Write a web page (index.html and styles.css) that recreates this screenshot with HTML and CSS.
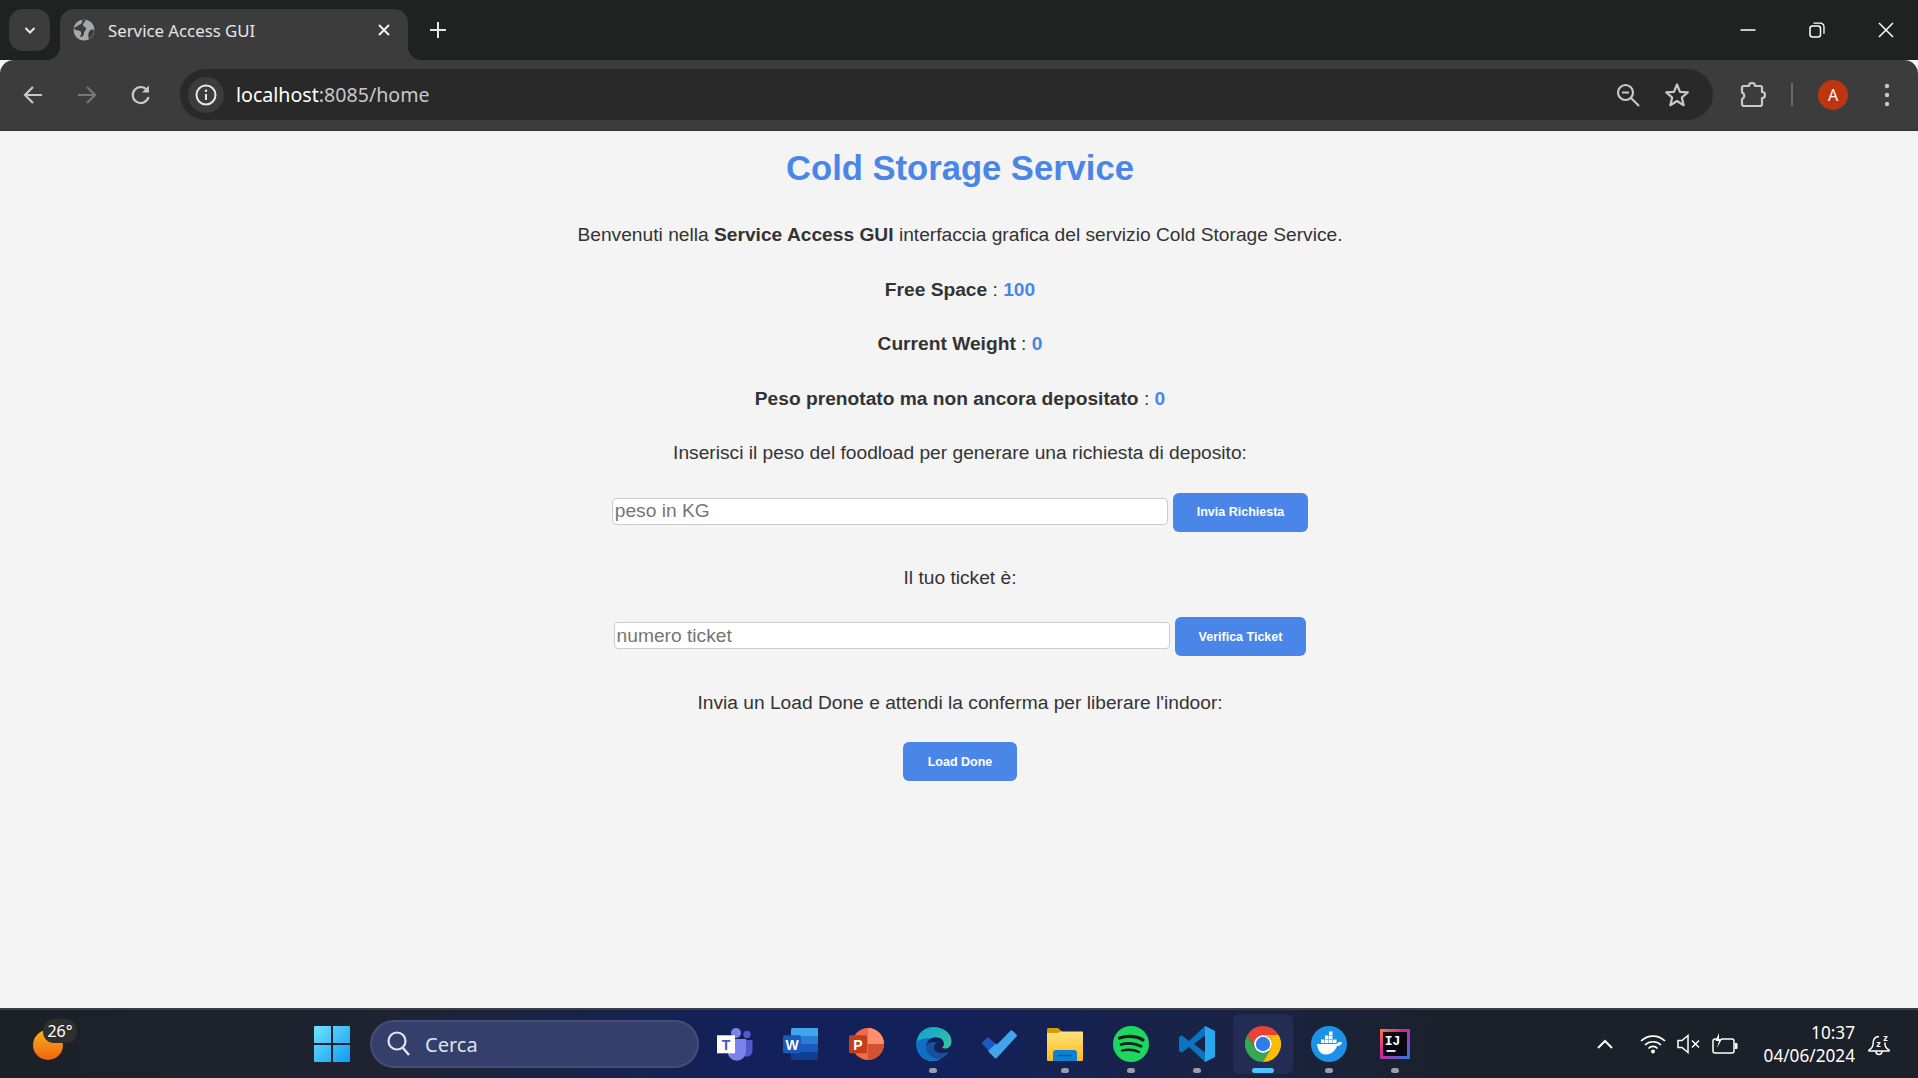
FILE: index.html
```html
<!DOCTYPE html>
<html lang="it">
<head>
    <meta charset="UTF-8">
    <meta name="viewport" content="width=device-width, initial-scale=1.0">
    <title>Service Access GUI</title>
    <link rel="stylesheet" href="styles.css">
</head>
<body>
    <div class="tabstrip">
        <div class="tab-search">
            <svg width="14" height="14" viewBox="0 0 14 14"><path d="M2.5 5L7 9.500 11.500 5" fill="none" stroke="#e8e8e8" stroke-width="2"/></svg>
        </div>
        <div class="tab">
            <svg width="22" height="22" viewBox="0 0 22 22"><circle cx="11" cy="11" r="10.500" fill="#a3a8ac"/><path d="M9 1c1 3-1 4-3 5S3 8 1 9c1 3 4 2 6 3s1 4 0 6c3 0 4-2 4-4s3-3 2-5-3-1-3-3 2-3 3-5zM21 11c-2-1-4 0-5 2s-1 5 0 7c3-2 5-5 5-9z" fill="#3c3c3c"/></svg>
            <span class="tab-title">Service Access GUI</span>
            <svg class="tab-close" width="14" height="14" viewBox="0 0 14 14"><path d="M2 2l10 10M12 2L2 12" stroke="#f0f0f0" stroke-width="2"/></svg>
        </div>
        <svg class="tab-new" width="18" height="18" viewBox="0 0 18 18"><path d="M9 1v16M1 9h16" stroke="#e6e6e6" stroke-width="2"/></svg>
        <div class="win-controls">
            <svg width="16" height="16" viewBox="0 0 16 16"><path d="M.5 8h15" stroke="#fff" stroke-width="1.500"/></svg>
            <svg width="16" height="16" viewBox="0 0 16 16"><rect x="1" y="4" width="10.500" height="11" rx="2.500" fill="none" stroke="#fff" stroke-width="1.500"/><path d="M4.500 1.200h7a3.500 3.500 0 0 1 3.500 3.500v7" fill="none" stroke="#fff" stroke-width="1.300"/></svg>
            <svg width="16" height="16" viewBox="0 0 16 16"><path d="M1 1l14 14M15 1L1 15" stroke="#fff" stroke-width="1.500"/></svg>
        </div>
    </div>

    <div class="toolbar">
        <div class="nav-btn">
            <svg width="22" height="22" viewBox="0 0 22 22"><path d="M20 11H4M11 3l-8 8 8 8" fill="none" stroke="#c8c8c8" stroke-width="2.200"/></svg>
        </div>
        <div class="nav-btn">
            <svg width="22" height="22" viewBox="0 0 22 22"><path d="M2 11h16M11 3l8 8-8 8" fill="none" stroke="#777" stroke-width="2.200"/></svg>
        </div>
        <div class="nav-btn">
            <svg width="22" height="22" viewBox="0 0 22 22"><path d="M18.500 13a8 8 0 1 1-1.500-7" fill="none" stroke="#c8c8c8" stroke-width="2.200"/><path d="M19 1.500v7h-7z" fill="#c8c8c8"/></svg>
        </div>
        <div class="omnibox">
            <div class="site-chip">
                <svg width="22" height="22" viewBox="0 0 22 22"><circle cx="11" cy="11" r="9.500" fill="none" stroke="#e8e8e8" stroke-width="2"/><path d="M11 10v6" stroke="#e8e8e8" stroke-width="2"/><circle cx="11" cy="6.800" r="1.300" fill="#e8e8e8"/></svg>
            </div>
            <span class="url">localhost<span class="url-dim">:8085/home</span></span>
            <svg width="24" height="24" viewBox="0 0 24 24"><circle cx="9.500" cy="9.500" r="7.500" fill="none" stroke="#c8c8c8" stroke-width="2.200"/><path d="M15 15l8 8" stroke="#c8c8c8" stroke-width="2.200"/><path d="M6 9.500h7" stroke="#c8c8c8" stroke-width="2"/></svg>
            <svg class="omni-star" width="26" height="26" viewBox="0 0 26 26"><path d="M13 2.500l3 7.300 7.800.6-6 5.100 1.900 7.700L13 19l-6.700 4.200 1.900-7.700-6-5.100 7.800-.6z" fill="none" stroke="#c8c8c8" stroke-width="2.200" stroke-linejoin="round"/></svg>
        </div>
        <svg class="ext-icon" width="26" height="26" viewBox="0 0 26 26"><path d="M2 5.500A1.500 1.500 0 0 1 3.500 4H9a3 3 0 0 1 6 0h5.500A1.500 1.500 0 0 1 22 5.500V10a3 3 0 0 1 0 6v6a2 2 0 0 1-2 2H4a2 2 0 0 1-2-2v-5a3.500 3.500 0 0 0 0-6.500z" fill="none" stroke="#c8c8c8" stroke-width="2.200" stroke-linejoin="round"/></svg>
        <div class="toolbar-sep"></div>
        <div class="avatar">A</div>
        <svg class="menu-dots" width="6" height="24" viewBox="0 0 6 24"><circle cx="3" cy="3" r="2.200" fill="#c8c8c8"/><circle cx="3" cy="12" r="2.200" fill="#c8c8c8"/><circle cx="3" cy="21" r="2.200" fill="#c8c8c8"/></svg>
    </div>

    <main class="page">
        <h1>Cold Storage Service</h1>
        <p>Benvenuti nella <b>Service Access GUI</b> interfaccia grafica del servizio Cold Storage Service.</p>
        <p><b>Free Space</b> : <b class="value">100</b></p>
        <p><b>Current Weight</b> : <b class="value">0</b></p>
        <p><b>Peso prenotato ma non ancora depositato</b> : <b class="value">0</b></p>
        <p>Inserisci il peso del foodload per generare una richiesta di deposito:</p>
        <div class="form-row">
            <input type="text" placeholder="peso in KG">
            <button>Invia Richiesta</button>
        </div>
        <p>Il tuo ticket è:</p>
        <div class="form-row">
            <input type="text" placeholder="numero ticket">
            <button>Verifica Ticket</button>
        </div>
        <p>Invia un Load Done e attendi la conferma per liberare l'indoor:</p>
        <div class="form-row">
            <button>Load Done</button>
        </div>
    </main>

    <div class="taskbar">
        <div class="weather">
            <div class="sun"></div>
            <span class="temp">26°</span>
        </div>
        <svg class="start" width="36" height="36" viewBox="0 0 36 36">
            <defs><linearGradient id="win" x1="0" y1="0" x2="1" y2="1"><stop offset="0" stop-color="#6fe4fb"/><stop offset="1" stop-color="#0f9bf5"/></linearGradient></defs>
            <path d="M0 1a1 1 0 0 1 1-1h16v17H0zM19 0h16a1 1 0 0 1 1 1v16H19zM0 19h17v17H1a1 1 0 0 1-1-1zM19 19h17v16a1 1 0 0 1-1 1H19z" fill="url(#win)"/>
        </svg>
        <div class="search">
            <svg width="26" height="28" viewBox="0 0 26 28"><circle cx="11" cy="11" r="8.500" fill="none" stroke="#e4e6ee" stroke-width="2.200"/><path d="M17 18l6 7" stroke="#e4e6ee" stroke-width="2.400"/></svg>
            <span>Cerca</span>
        </div>
        <div class="apps">
            <div class="app">
                <svg width="36" height="33" viewBox="0 0 36 33"><circle cx="30" cy="6.500" r="3.700" fill="#5059c9"/><path d="M28 12h7.500v11a6 6 0 0 1-7.500 5.500z" fill="#5059c9"/><circle cx="19" cy="5" r="5" fill="#7b83eb"/><path d="M10.500 11H29v12.500a9.200 9.200 0 0 1-18.500 0z" fill="#7b83eb"/><rect x="0" y="7.300" width="18" height="18" fill="#fff"/><text x="9" y="21.500" class="tile-letter tile-teams">T</text></svg>
            </div>
            <div class="app">
                <svg width="36" height="33" viewBox="0 0 36 33"><path d="M9.500 0H34a1 1 0 0 1 1 1v7H8V1.500A1.500 1.500 0 0 1 9.500 0z" fill="#41a5ee"/><rect x="8" y="8" width="27" height="8" fill="#2b7cd3"/><rect x="8" y="16" width="27" height="8" fill="#185abd"/><path d="M8 24h27v7a1 1 0 0 1-1 1H9.500A1.500 1.500 0 0 1 8 30.500z" fill="#103f91"/><rect x="0" y="7.300" width="18" height="18" rx="1.500" fill="#185abd"/><text x="9" y="21.500" class="tile-letter">W</text></svg>
            </div>
            <div class="app">
                <svg width="36" height="33" viewBox="0 0 36 33"><circle cx="19" cy="16" r="16" fill="#ed6c47"/><path d="M19 0a16 16 0 0 1 16 16H19z" fill="#ff8f6b"/><path d="M19 32a16 16 0 0 0 16-16H19z" fill="#d35230"/><rect x="0" y="7.300" width="18" height="18" rx="1.500" fill="#c43e1c"/><text x="9" y="21.500" class="tile-letter">P</text></svg>
            </div>
            <div class="app">
                <svg width="37" height="36" viewBox="0 0 38 38">
                    <defs><linearGradient id="edgeTop" x1="0" y1="0" x2="1" y2="1"><stop offset="0" stop-color="#0c9ed8"/><stop offset="0.700" stop-color="#33c2a6"/><stop offset="1" stop-color="#6ee05a"/></linearGradient></defs>
                    <path d="M19 1C8 1 1 9 1 19c0 11 8 18 17 18 3 0 6-1 8-2-7 0-15-5-15-13 0-6 5-10 10-10 6 0 9 3 9 7 0 2-1 3-2 4 4 2 10 0 10-7C38 8 30 1 19 1z" fill="url(#edgeTop)"/>
                    <path d="M1 19c0 11 8 18 17 18 3 0 6-1 8-2-7 0-15-5-15-13 0-4 2-7 5-9-9 0-15 2-15 6z" fill="#0f6fc6"/>
                    <path d="M11 22c0 8 8 13 15 13 4-2 7-4 9-8-4 2-9 3-13 0-3-2-3-6-1-8 1-1 2-1 3-1-6-3-13 0-13 4z" fill="#15539c"/>
                </svg>
            </div>
            <div class="app">
                <svg width="36" height="29" viewBox="0 0 36 29"><path d="M.5 13L7 7l11 10-7.500 7z" fill="#185abd"/><path d="M29.500.8a1.500 1.500 0 0 1 2 0L35.500 4.500a1.500 1.500 0 0 1 0 2L16 27.800a1.800 1.800 0 0 1-2.600 0L7 21l8-7.500 1 1z" fill="#41a5ee"/></svg>
            </div>
            <div class="app">
                <svg width="36" height="33" viewBox="0 0 36 33">
                    <defs><linearGradient id="fold" x1="0" y1="0" x2="0" y2="1"><stop offset="0" stop-color="#ffe27a"/><stop offset="1" stop-color="#fdbb1d"/></linearGradient></defs>
                    <path d="M0 1.500A1.500 1.500 0 0 1 1.500 0H11l5 4.500-16 3z" fill="#d59c06"/><path d="M0 5h11L14 3.500h21a1 1 0 0 1 1 1V32a1 1 0 0 1-1 1H1a1 1 0 0 1-1-1z" fill="url(#fold)"/><path d="M6 33v-8a3 3 0 0 1 3-3h18a3 3 0 0 1 3 3v8z" fill="#0f7fd1"/><path d="M11 27.500h14" stroke="#0a5ca3" stroke-width="1.500"/>
                </svg>
            </div>
            <div class="app">
                <svg width="36" height="36" viewBox="0 0 36 36"><circle cx="18" cy="18" r="18" fill="#1ed760"/><path d="M6.500 12c8-2.300 17-1.800 23.500 2" fill="none" stroke="#10201a" stroke-width="3.200" stroke-linecap="round"/><path d="M8 18.500c7-1.800 14-1.300 20 1.800" fill="none" stroke="#10201a" stroke-width="2.800" stroke-linecap="round"/><path d="M9 24.500c6-1.300 12-.9 17 1.500" fill="none" stroke="#10201a" stroke-width="2.300" stroke-linecap="round"/></svg>
            </div>
            <div class="app">
                <svg width="36" height="36" viewBox="0 0 36 36"><path fill-rule="evenodd" d="M26 0v9.500L15 18l11 8.500V36L10 21l-7 5.500-3-1.500V11l3-1.500L10 15z" fill="#0a74c0"/><path d="M26 0l10 5v26l-10 5z" fill="#27a9f0"/></svg>
            </div>
            <div class="app app-active">
                <svg width="36" height="36" viewBox="0 0 36 36"><path d="M2.400 9A18 18 0 0 1 33.600 9H18A9 9 0 0 0 10.200 22.500z" fill="#ea4335"/><path d="M2.400 9A18 18 0 0 0 18 36L25.800 22.500A9 9 0 0 1 10.200 22.500z" fill="#34a853"/><path d="M18 36A18 18 0 0 0 33.600 9H18A9 9 0 0 1 25.800 22.500z" fill="#fbbc04"/><circle cx="18" cy="18" r="9" fill="#fff"/><circle cx="18" cy="18" r="7.200" fill="#2f7de9"/></svg>
            </div>
            <div class="app">
                <svg width="36" height="36" viewBox="0 0 36 36"><circle cx="18" cy="18" r="18" fill="#1d91e6"/><path d="M6 18h20c1-2 3-2.500 5-1.500-.5 2-2 3.500-5 3.500-2 6-7 8.500-11.500 8.500S7 25 6 18z" fill="#fff"/><path d="M10 13.500h3.500V17H10zM14 13.500h3.500V17H14zM18 13.500h3.500V17H18zM22 13.500h3.500V17H22zM18 9.500h3.500V13H18zM14 9.500h3.500V13H14zM18 5.500h3.500V9H18z" fill="#fff"/></svg>
            </div>
            <div class="app">
                <svg width="30" height="30" viewBox="0 0 30 30">
                    <defs><linearGradient id="ij" x1="0" y1="0" x2="1" y2="1"><stop offset="0" stop-color="#fd7e3a"/><stop offset="0.400" stop-color="#d6248f"/><stop offset="1" stop-color="#1f7cf0"/></linearGradient></defs>
                    <rect width="30" height="30" fill="url(#ij)"/><rect x="3" y="3" width="24" height="24" fill="#0b0712"/><text x="12.500" y="16" class="tile-ij">IJ</text><path d="M6.500 22h9" stroke="#fff" stroke-width="1.800"/>
                </svg>
            </div>
        </div>
        <div class="tray">
            <svg width="18" height="12" viewBox="0 0 18 12"><path d="M2 10l7-7 7 7" fill="none" stroke="#fff" stroke-width="2"/></svg>
            <svg class="tray-wifi" width="26" height="20" viewBox="0 0 26 20"><path d="M1 7a17 17 0 0 1 24 0M5 11a11.500 11.500 0 0 1 16 0M8.500 14.500a6 6 0 0 1 9 0" fill="none" stroke="#fff" stroke-width="1.700"/><circle cx="13" cy="17.500" r="2" fill="#fff"/></svg>
            <svg class="tray-sound" width="24" height="20" viewBox="0 0 24 20"><path d="M1 6.500h4l6-5v17l-6-5H1z" fill="none" stroke="#fff" stroke-width="1.500"/><path d="M15 6.500l7 7M22 6.500l-7 7" stroke="#fff" stroke-width="1.500"/></svg>
            <svg class="tray-batt" width="26" height="24" viewBox="0 0 26 24"><path d="M6 7H3a2 2 0 0 0-2 2v10a2 2 0 0 0 2 2h17a2 2 0 0 0 2-2V9a2 2 0 0 0-2-2H9" fill="none" stroke="#fff" stroke-width="1.500"/><path d="M23 11h1.500a1 1 0 0 1 1 1v4a1 1 0 0 1-1 1H23z" fill="#fff"/><path d="M7 1L3.500 9H7l-2 7 5-9H7z" fill="#fff"/></svg>
            <div class="clock">
                <span>10:37</span>
                <span>04/06/2024</span>
            </div>
            <svg class="tray-bell" width="24" height="26" viewBox="0 0 24 26"><path d="M11 5.500c-4.500 0-6 3.500-6 7.500 0 3-1.500 4.500-4 6v1h20v-1c-2.500-1.500-4-3-4-6v-1.500M8 20.500a3 3 0 0 0 6 0" fill="none" stroke="#fff" stroke-width="1.500"/><text x="10.500" y="16" class="tray-z">z</text><text x="17.500" y="10" class="tray-z">z</text></svg>
        </div>
    </div>
</body>
</html>
```

FILE: styles.css
```css
* {
    box-sizing: border-box;
}
html, body {
    height: 100%;
}
body {
    margin: 0;
    display: flex;
    flex-direction: column;
    overflow: hidden;
    background: #f4f4f4;
    font-family: "Liberation Sans", Arial, sans-serif;
}

/* browser tabs */
.tabstrip {
    height: 60px;
    flex: none;
    display: flex;
    align-items: flex-start;
    padding: 9px 0 0 9px;
    background: #202221;
}
.tab-search {
    width: 41px;
    height: 42px;
    display: flex;
    align-items: center;
    justify-content: center;
    background: #3c3c3c;
    border-radius: 14px;
}
.tab {
    position: relative;
    width: 348px;
    height: 51px;
    margin-left: 10px;
    padding: 0 17px 9px 13px;
    display: flex;
    align-items: center;
    background: #3c3c3c;
    border-radius: 14px 14px 0 0;
}
.tab::before, .tab::after {
    content: "";
    position: absolute;
    bottom: 0;
    width: 14px;
    height: 14px;
}
.tab::before {
    left: -14px;
    background: radial-gradient(circle at 0 0, #202221 14px, #3c3c3c 14.5px);
}
.tab::after {
    right: -14px;
    background: radial-gradient(circle at 100% 0, #202221 14px, #3c3c3c 14.5px);
}
.tab-title {
    flex: 1;
    margin-left: 13px;
    font-family: "Noto Sans", sans-serif;
    font-size: 16.8px;
    color: #e6e6e6;
}
.tab-new {
    margin: 12px 0 0 21px;
}
.win-controls {
    margin-left: auto;
    height: 42px;
    display: flex;
    align-items: center;
    gap: 53px;
    padding-right: 24px;
}

/* address bar row */
.toolbar {
    height: 71px;
    flex: none;
    display: flex;
    align-items: center;
    padding-left: 6px;
    background: #3c3c3c;
    border-radius: 14px 14px 0 0;
    border-bottom: 2px solid #353535;
}
.nav-btn {
    width: 54px;
    display: flex;
    justify-content: center;
}
.omnibox {
    width: 1533px;
    height: 51px;
    margin-left: 12px;
    padding: 0 23px 0 8px;
    display: flex;
    align-items: center;
    background: #292929;
    border-radius: 26px;
}
.site-chip {
    width: 36px;
    height: 36px;
    display: flex;
    align-items: center;
    justify-content: center;
    background: #3c3c3c;
    border-radius: 50%;
}
.url {
    flex: 1;
    margin-left: 12px;
    font-family: "Noto Sans", sans-serif;
    font-size: 19.6px;
    color: #fff;
}
.url-dim {
    color: #c8c8c8;
}
.omni-star {
    margin-left: 24px;
}
.ext-icon {
    margin-left: 27px;
}
.toolbar-sep {
    width: 2px;
    height: 23px;
    margin-left: 25px;
    background: #6a6a6a;
}
.avatar {
    width: 30px;
    height: 30px;
    margin-left: 25px;
    display: flex;
    align-items: center;
    justify-content: center;
    background: #bd3610;
    border-radius: 50%;
    font-family: "Noto Sans", sans-serif;
    font-size: 16px;
    color: #fff;
}
.menu-dots {
    margin-left: 36px;
}

/* page content */
.page {
    flex: 1;
    padding: 19px 0 0 2px;
    text-align: center;
    color: #333;
    font-size: 19.2px;
    line-height: 30px;
}
h1 {
    margin: 0 0 33.2px;
    font-size: 34.6px;
    line-height: 37px;
    color: #4a86e8;
}
p {
    margin: 0 0 24.5px;
}
.value {
    color: #4a86e8;
}
.form-row {
    height: 39px;
    margin-bottom: 31.3px;
    display: flex;
    justify-content: center;
    gap: 5px;
}
input {
    width: 556px;
    height: 27px;
    margin-top: 5px;
    padding: 0 2px;
    font-family: inherit;
    font-size: 19.2px;
    background: #fff;
    border: 1.2px solid #ccc;
    border-radius: 4px;
}
input::placeholder {
    color: #757575;
}
button {
    min-width: 114px;
    height: 39px;
    padding: 0 24px;
    background: #4a86e8;
    color: #fff;
    font-family: inherit;
    font-size: 12.5px;
    font-weight: bold;
    border: none;
    border-radius: 6px;
}

/* windows taskbar */
.taskbar {
    height: 70px;
    flex: none;
    display: flex;
    align-items: center;
    border-top: 2px solid #3a3e44;
    background: linear-gradient(90deg, #1c2027 0%, #1e2330 20%, #13215a 38%, #13215a 50%, #1a2340 66%, #1b2029 76%);
    color: #fff;
}
.weather {
    position: relative;
    width: 46px;
    height: 68px;
    margin-left: 33px;
}
.sun {
    position: absolute;
    left: 0;
    top: 20px;
    width: 30px;
    height: 30px;
    border-radius: 50%;
    background: linear-gradient(#f6b21d, #f0640f);
}
.temp {
    position: absolute;
    left: 10px;
    top: 9px;
    width: 34px;
    height: 24px;
    background: #2f302e;
    border-radius: 11px;
    text-align: center;
    font-family: "Noto Sans", sans-serif;
    font-size: 16px;
    line-height: 24px;
}
.start {
    margin-left: 235px;
}
.search {
    width: 329px;
    height: 48px;
    margin-left: 20px;
    padding-left: 14px;
    display: flex;
    align-items: center;
    gap: 13px;
    background: #353f6c;
    border: 2px solid #454e78;
    border-radius: 24px;
    font-family: "Noto Sans", sans-serif;
    font-size: 20px;
    color: #dfe2ea;
}
.apps {
    margin-left: 3px;
    display: flex;
    align-items: center;
}
.app {
    position: relative;
    width: 66px;
    height: 68px;
    display: flex;
    align-items: center;
    justify-content: center;
}
.app:nth-child(4)::after, .app:nth-child(6)::after, .app:nth-child(7)::after,
.app:nth-child(8)::after, .app:nth-child(10)::after, .app:nth-child(11)::after {
    content: "";
    position: absolute;
    bottom: 5px;
    left: 29px;
    width: 8px;
    height: 5px;
    background: #9a9ea8;
    border-radius: 3px;
}
.app-active {
    width: 60px;
    height: 60px;
    margin: 0 3px;
    background: #232d53;
    border-radius: 7px;
}
.app-active::after {
    content: "";
    position: absolute;
    bottom: 1px;
    left: 19px;
    width: 22px;
    height: 5px;
    background: #4cc2ff;
    border-radius: 3px;
}
.tile-letter {
    font-family: "Liberation Sans", sans-serif;
    font-size: 14px;
    font-weight: bold;
    fill: #fff;
    text-anchor: middle;
}
.tile-teams {
    fill: #4b53bc;
}
.tile-ij {
    font-family: "Liberation Mono", monospace;
    font-size: 13px;
    font-weight: bold;
    fill: #fff;
    text-anchor: middle;
}
.tray {
    flex: 1;
    height: 68px;
    display: flex;
    align-items: center;
    padding-left: 168px;
}
.tray-wifi {
    margin-left: 26px;
}
.tray-sound {
    margin-left: 11px;
}
.tray-batt {
    margin-left: 11px;
}
.clock {
    width: 117px;
    display: flex;
    flex-direction: column;
    align-items: flex-end;
    font-family: "Noto Sans", sans-serif;
    font-size: 17.2px;
    line-height: 23px;
}
.tray-bell {
    margin-left: 13px;
}
.tray-z {
    font-family: "Noto Sans", sans-serif;
    font-size: 9px;
    font-weight: bold;
    fill: #fff;
    text-anchor: middle;
}
```
